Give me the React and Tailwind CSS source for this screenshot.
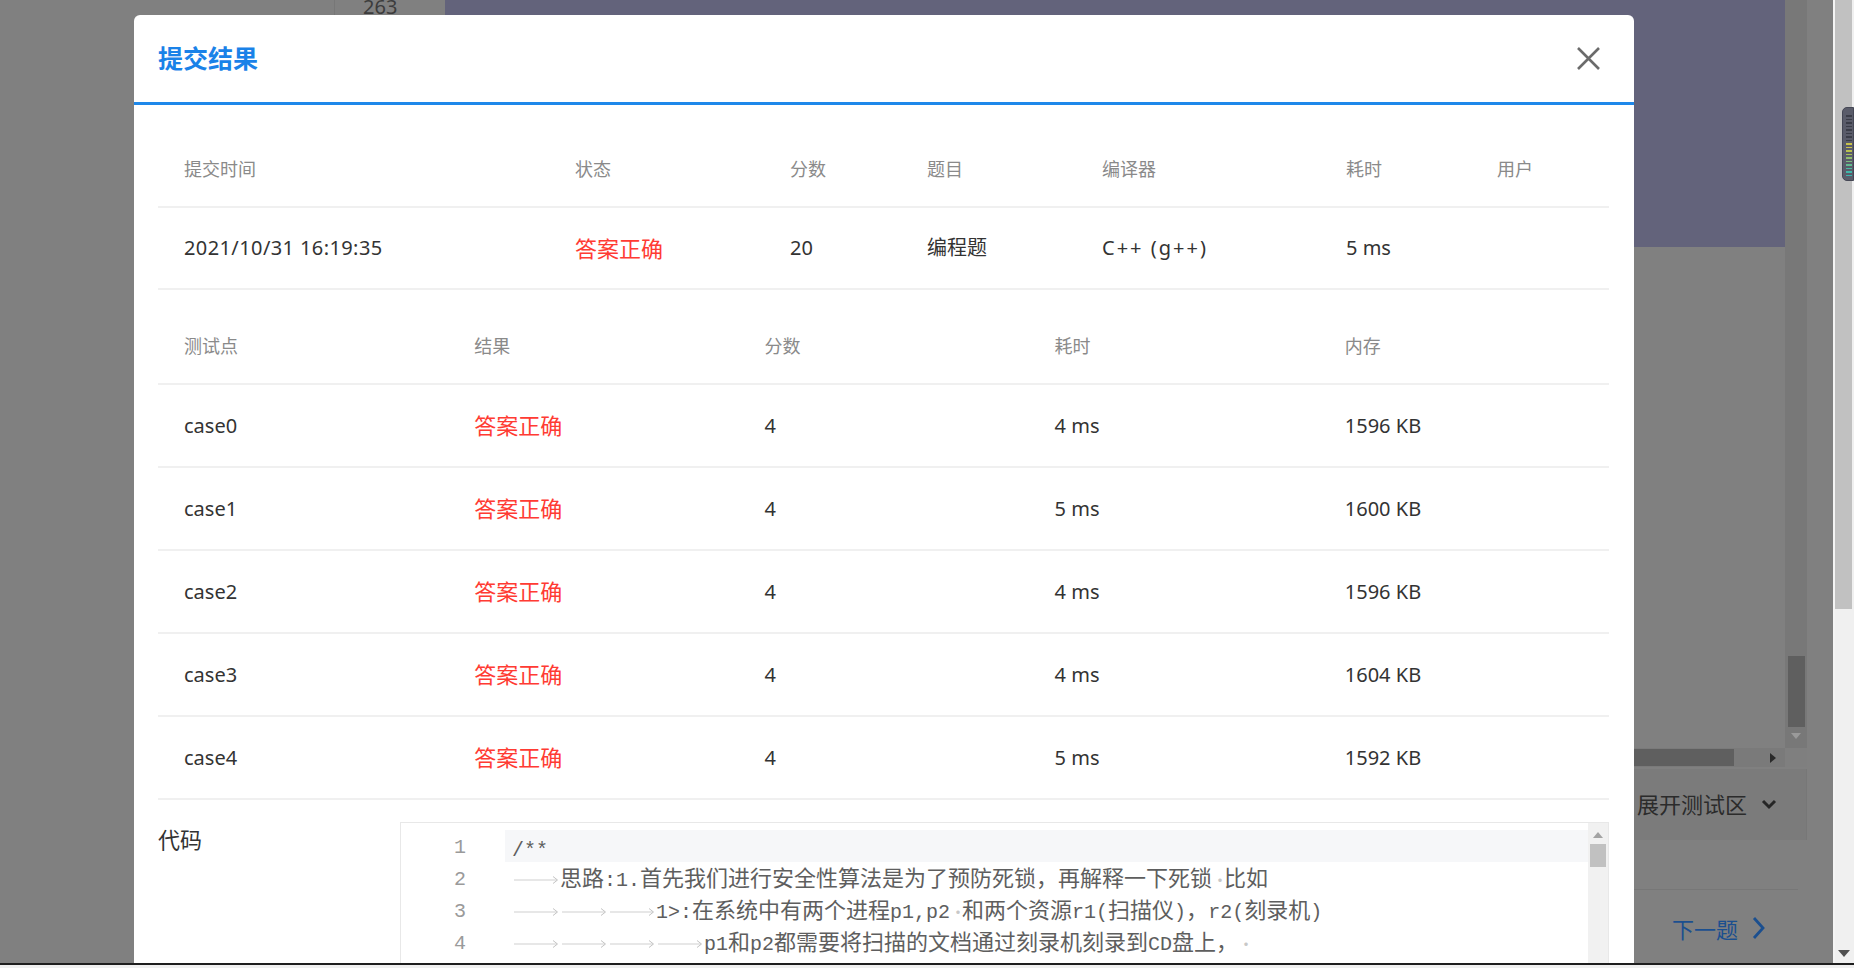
import React from 'react';

const sans = "font-['Noto_Sans','Noto_Sans_CJK_SC',sans-serif]";

const summaryCols = 'grid grid-cols-[391px_215px_137px_175px_244px_151px_138px]';
const summaryHead = ['提交时间', '状态', '分数', '题目', '编译器', '耗时', '用户'];

const cases = [
  ['case0', '4', '4 ms', '1596 KB'],
  ['case1', '4', '5 ms', '1600 KB'],
  ['case2', '4', '4 ms', '1596 KB'],
  ['case3', '4', '4 ms', '1604 KB'],
  ['case4', '4', '5 ms', '1592 KB'],
];

const codeLines = [
  '/**',
  '\t思路:1.首先我们进行安全性算法是为了预防死锁，再解释一下死锁·比如',
  '\t\t\t1>:在系统中有两个进程p1,p2·和两个资源r1(扫描仪)，r2(刻录机)',
  '\t\t\t\tp1和p2都需要将扫描的文档通过刻录机刻录到CD盘上，·',
  '\t\t\t\t进程p1先请求扫描仪r1成功，进程p2先请求刻录机r2成功，那么接下来',
];

function TabArrow() {
  return (
    <span className="inline-block w-[48px] h-[12px] align-middle">
      <svg width="48" height="12" viewBox="0 0 48 12" className="block">
        <line x1="2" y1="6" x2="45" y2="6" stroke="#cfcfcf" strokeWidth="1" />
        <path d="M41 2.5 L45.5 6 L41 9.5" fill="none" stroke="#c4c4c4" strokeWidth="1" />
      </svg>
    </span>
  );
}

function CodeText({ text }) {
  const parts = text.split(/(\t|·|[\x20-\x7e]+)/).filter((s) => s);
  return parts.map((p, i) => {
    if (p === '\t') return <TabArrow key={i} />;
    if (p === '·')
      return (
        <span key={i} className="inline-block w-[12px] text-center text-[16px] leading-none text-[#c8c8c8]">
          ·
        </span>
      );
    if (/^[\x20-\x7e]+$/.test(p))
      return (
        <span key={i} className="font-['Liberation_Mono',monospace] text-[20px] leading-none">
          {p}
        </span>
      );
    return (
      <span key={i} className="text-[22px] leading-none">
        {p}
      </span>
    );
  });
}

function Modal() {
  return (
    <div className={`absolute left-[134px] top-[15px] w-[1500px] h-[1000px] bg-white rounded-t-[6px] ${sans}`}>
      {/* 标题栏 */}
      <div className="h-[90px] flex items-center justify-between pl-[24px] pr-[33px] border-b-[3px] border-[#1e88ea]">
        <h2 className="text-[25px] font-bold text-[#1a82e8] leading-none">提交结果</h2>
        <svg width="25" height="25" viewBox="0 0 25 25">
          <path d="M2 2 L23 23 M23 2 L2 23" stroke="#6b6b6b" strokeWidth="2.6" />
        </svg>
      </div>

      <div className="pl-[24px] pr-[25px] pt-[25px]">
        {/* 提交概览 */}
        <div className={`${summaryCols} h-[78px] items-center border-b-2 border-[#f0f0f0] text-[18px] text-[#8a8a8a]`}>
          {summaryHead.map((h) => (
            <div key={h} className="pl-[26px] pt-[2px]">{h}</div>
          ))}
        </div>
        <div className={`${summaryCols} h-[82px] items-center border-b-2 border-[#f0f0f0] text-[20px] text-[#333]`}>
          <div className="pl-[26px] tracking-[0.4px]">2021/10/31 16:19:35</div>
          <div className="pl-[26px] text-[22px] text-[#ff3b33]">答案正确</div>
          <div className="pl-[26px]">20</div>
          <div className="pl-[26px]">编程题</div>
          <div className="pl-[26px] tracking-[2px]">C++ (g++)</div>
          <div className="pl-[26px]">5 ms</div>
          <div className="pl-[26px]" />
        </div>

        {/* 测试点 */}
        <div className="mt-[19px] grid grid-cols-5 h-[76px] items-center border-b-2 border-[#f0f0f0] text-[18px] text-[#8a8a8a]">
          {['测试点', '结果', '分数', '耗时', '内存'].map((h) => (
            <div key={h} className="pl-[26px]">{h}</div>
          ))}
        </div>
        {cases.map(([name, score, time, mem]) => (
          <div key={name} className="grid grid-cols-5 h-[83px] items-center border-b-2 border-[#f0f0f0] text-[20px] text-[#333]">
            <div className="pl-[26px]">{name}</div>
            <div className="pl-[26px] text-[22px] text-[#ff3b33]">答案正确</div>
            <div className="pl-[26px]">{score}</div>
            <div className="pl-[26px]">{time}</div>
            <div className="pl-[26px]">{mem}</div>
          </div>
        ))}

        {/* 代码 */}
        <div className="mt-[22px] flex">
          <div className="w-[242px] pt-[1px] text-[22px] leading-[32px] text-[#333]">代码</div>
          <div className="flex-1 h-[200px] flex border border-[#e8e8e8] bg-white">
            <div className="w-[104px] pt-[9px] pr-[39px] text-right font-['Liberation_Mono',monospace] text-[20px] text-[#9a9a9a]">
              {codeLines.map((_, i) => (
                <div key={i} className="h-[32px] leading-[32px]">{i + 1}</div>
              ))}
            </div>
            <div className="flex-1 pt-[7px] text-[#5e5e5e] font-['Noto_Sans_CJK_SC',sans-serif] text-[22px]">
              {codeLines.map((l, i) => (
                <div
                  key={i}
                  className={`h-[32px] leading-[32px] pl-[7px] whitespace-pre ${i === 0 ? 'bg-[#f6f7f9]' : ''}`}
                >
                  <span className={`relative ${i === 0 ? 'top-[0px]' : '-top-[2px]'}`}>
                    <CodeText text={l} />
                  </span>
                </div>
              ))}
            </div>
            <div className="w-[20px] bg-[#f1f1f1] flex flex-col items-center pt-[9px]">
              <svg width="10" height="6" viewBox="0 0 10 6">
                <path d="M0 6 L5 0 L10 6 Z" fill="#a3a3a3" />
              </svg>
              <div className="mt-[6px] w-[16px] h-[23px] bg-[#c1c1c1]" />
            </div>
          </div>
        </div>
      </div>
    </div>
  );
}

function Gadget() {
  const bars = [
    '#3b3d48', '#3b3d48', '#3b3d48', '#3b3d48', '#3b3d48', '#3b3d48', '#3b3d48', '#3b3d48',
    '#c9c24a', '#c9c24a', '#b9c04e', '#a6be5a', '#8fbd6c', '#7abd7e', '#62bc90', '#4bb9a0', '#3fb7aa', '#3ab4ae',
  ];
  return (
    <div className="absolute right-0 top-[107px] w-[12px] h-[74px] rounded-l-[5px] bg-[#5a5c6a] border border-[#454755] flex flex-col items-end pt-[7px] pr-[1px] gap-[2px]">
      {bars.map((c, i) => (
        <div key={i} className="w-[6px] h-[1.5px]" style={{ backgroundColor: c }} />
      ))}
    </div>
  );
}

export default function App() {
  return (
    <div className={`relative w-[1854px] h-[968px] overflow-hidden bg-[#808080] flex flex-col ${sans}`}>
      <div className="h-[963px] flex">
        {/* 左侧 */}
        <div className="w-[334px]" />
        <div className="w-[111px] border-l border-[#777] overflow-hidden">
          <div className="-mt-[5px] pl-[28px] text-[20px] leading-[24px] text-[#3c3c3c]">263</div>
        </div>

        {/* 中间页面 */}
        <div className="w-[1362px] flex flex-col">
          <div className="h-[767px] flex">
            <div className="flex-1 flex flex-col">
              <div className="h-[247px] bg-[#63637b]" />
              <div className="flex-1" />
              <div className="h-[19px] bg-[#7a7a7a] flex items-center">
                <div className="ml-[655px] w-[634px] h-[17px] bg-[#5f5f5f]" />
                <svg width="6" height="10" viewBox="0 0 6 10" className="ml-auto mr-[9px]">
                  <path d="M0 0 L6 5 L0 10 Z" fill="#2a2a2a" />
                </svg>
              </div>
            </div>
            <div className="w-[22px] flex flex-col">
              <div className="flex-1 bg-[#787878] flex flex-col items-center">
                <div className="h-[656px]" />
                <div className="w-[17px] h-[71px] bg-[#5f5f5f]" />
                <svg width="10" height="6" viewBox="0 0 10 6" className="mt-[6px]">
                  <path d="M0 0 L10 0 L5 6 Z" fill="#9a9a9a" />
                </svg>
              </div>
              <div className="h-[19px] bg-[#7f7f7f]" />
            </div>
          </div>
          <div className="mt-[2px] h-[71px] bg-[#7b7b7b] border-r border-[#777] flex items-center justify-end pr-[29px] gap-[14px]">
            <span className="text-[22px] text-[#2b2b2b]">展开测试区</span>
            <svg width="16" height="11" viewBox="0 0 16 11">
              <path d="M2 2 L8 8 L14 2" fill="none" stroke="#262626" strokeWidth="3" />
            </svg>
          </div>
          <div className="h-[50px] w-[1353px] border-b border-[#777]" />
          <div className="flex-1 flex items-start justify-end pr-[42px] pt-[26px] gap-[14px]">
            <span className="text-[22px] leading-[26px] text-[#1b4f8f]">下一题</span>
            <svg width="13" height="24" viewBox="0 0 13 24">
              <path d="M2 2 L11 12 L2 22" fill="none" stroke="#1b4f8f" strokeWidth="2.8" />
            </svg>
          </div>
        </div>

        <div className="w-[26px]" />

        {/* 页面滚动条 */}
        <div className="w-[21px] bg-[#f0f0f0] border-l-2 border-[#f4f4f4] flex flex-col">
          <div className="w-[17px] h-[609px] bg-[#c1c1c1]" />
          <div className="flex-1" />
          <svg width="12" height="7" viewBox="0 0 12 7" className="ml-[3px] mb-[6px]">
            <path d="M0 0 L12 0 L6 7 Z" fill="#505050" />
          </svg>
        </div>
      </div>

      <Modal />
      <Gadget />

      <div className="relative z-10 h-[5px] border-t-2 border-[#1e1e1e] bg-[#f0f0f0]" />
    </div>
  );
}
